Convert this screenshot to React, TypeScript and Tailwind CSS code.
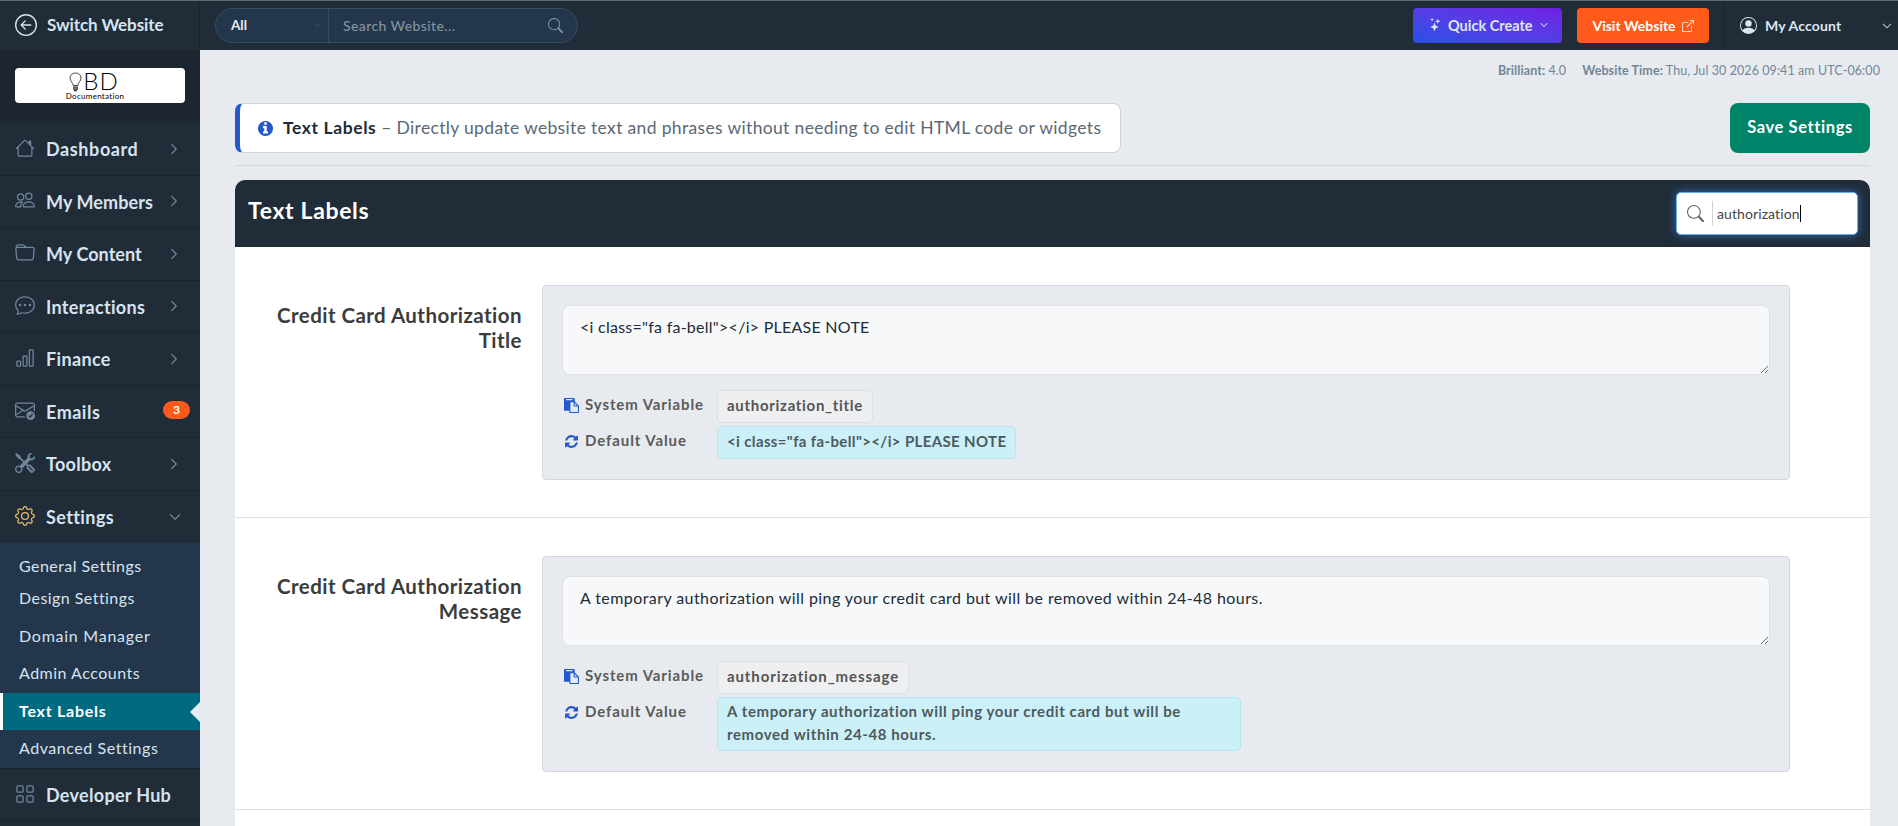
import type { ReactNode } from "react";
import type { IconType } from "react-icons";
import {
  BsArrowLeftCircle,
  BsBarChart,
  BsBoxArrowUpRight,
  BsChatDots,
  BsChevronDown,
  BsChevronRight,
  BsEnvelopeCheck,
  BsFolder,
  BsGear,
  BsGrid,
  BsHouse,
  BsPeople,
  BsPersonCircle,
  BsSearch,
  BsStars,
  BsTools,
} from "react-icons/bs";

type NavItem = { label: string; icon: IconType; tracking: string; badge?: string; open?: boolean };

const navItems: NavItem[] = [
  { label: "Dashboard", icon: BsHouse, tracking: "tracking-[0.6px]" },
  { label: "My Members", icon: BsPeople, tracking: "tracking-[0.1px]" },
  { label: "My Content", icon: BsFolder, tracking: "tracking-[0.05px]" },
  { label: "Interactions", icon: BsChatDots, tracking: "tracking-[0.3px]" },
  { label: "Finance", icon: BsBarChart, tracking: "tracking-[0.35px]" },
  { label: "Emails", icon: BsEnvelopeCheck, tracking: "tracking-[0.5px]", badge: "3" },
  { label: "Toolbox", icon: BsTools, tracking: "tracking-[0.3px]" },
  { label: "Settings", icon: BsGear, tracking: "tracking-[0.4px]", open: true },
];

const settingsLinks = [
  { label: "General Settings", size: "h-[33px]", tracking: "tracking-[0.45px]" },
  { label: "Design Settings", size: "h-[31px]", tracking: "tracking-[0.45px]" },
  { label: "Domain Manager", size: "h-[37px] mt-1", tracking: "tracking-[0.75px]" },
  { label: "Admin Accounts", size: "h-[38px]", tracking: "tracking-[0.5px]" },
  { label: "Text Labels", size: "h-[37px]", tracking: "tracking-[0.75px]", active: true },
  { label: "Advanced Settings", size: "h-[38px]", tracking: "tracking-[0.55px]" },
];

const labels = [
  {
    title: "Credit Card Authorization Title",
    text: '<i class="fa fa-bell"></i> PLEASE NOTE',
    variable: "authorization_title",
    variableClass: "tracking-[0.7px]",
    textClass: "tracking-[0.26px]",
    defaultClass: "tracking-[0.36px] pt-[3px] pb-[5px]",
  },
  {
    title: "Credit Card Authorization Message",
    text: "A temporary authorization will ping your credit card but will be removed within 24-48 hours.",
    variable: "authorization_message",
    variableClass: "tracking-[0.9px]",
    textClass: "tracking-[0.42px]",
    defaultClass: "tracking-[0.6px] pt-[2px] pb-1",
  },
];

const InfoIcon = () => (
  <svg viewBox="128 128 1536 1536" className="w-[15px] h-[15px] fill-[#2359cd] shrink-0">
    <path d="M1152 1376v-160q0-14-9-23t-23-9h-96v-512q0-14-9-23t-23-9h-320q-14 0-23 9t-9 23v160q0 14 9 23t23 9h96v320h-96q-14 0-23 9t-9 23v160q0 14 9 23t23 9h448q14 0 23-9t9-23zm-128-896v-192q0-14-9-23t-23-9h-192q-14 0-23 9t-9 23v192q0 14 9 23t23 9h192q14 0 23-9t9-23zm640 416q0 209-103 385.5t-279.5 279.5-385.5 103-385.5-103-279.5-279.5-103-385.5 103-385.5 279.5-279.5 385.5-103 385.5 103 279.5 279.5 103 385.5z" />
  </svg>
);

const PasteIcon = () => (
  <svg viewBox="0 0 1792 1792" className="w-[15px] h-[15px] fill-[#2359cd]">
    <path d="M768 1664h896v-640h-416q-40 0-68-28t-28-68v-416h-384v1152zm256-1440v-64q0-13-9.5-22.5t-22.5-9.5h-704q-13 0-22.5 9.5t-9.5 22.5v64q0 13 9.5 22.5t22.5 9.5h704q13 0 22.5-9.5t9.5-22.5zm256 672h299l-299-299v299zm512 128v672q0 40-28 68t-68 28h-960q-40 0-68-28t-28-68v-160h-544q-40 0-68-28t-28-68v-1344q0-40 28-68t68-28h1088q40 0 68 28t28 68v328q21 13 36 28l408 408q28 28 48 76t20 88z" />
  </svg>
);

const RefreshIcon = () => (
  <svg viewBox="0 0 1536 1536" className="w-[13px] h-[13px] mx-px fill-[#2359cd]">
    <path d="M1511 928q0 5-1 7-64 268-268 434.5t-478 166.5q-146 0-282.5-55t-243.5-157l-129 129q-19 19-45 19t-45-19-19-45v-448q0-26 19-45t45-19h448q26 0 45 19t19 45-19 45l-137 137q71 66 161 102t187 36q134 0 250-65t186-179q11-17 53-117 8-23 30-23h192q13 0 22.5 9.5t9.5 22.5zm25-800v448q0 26-19 45t-45 19h-448q-26 0-45-19t-19-45 19-45l138-138q-148-137-349-137-134 0-250 65t-186 179q-11 17-53 117-8 23-30 23h-199q-13 0-22.5-9.5t-9.5-22.5v-7q65-268 270-434.5t480-166.5q146 0 284 55.5t245 156.5l130-129q19-19 45-19t45 19 19 45z" />
  </svg>
);

const Logo = () => (
  <div className="h-[35px] bg-white rounded-[4px] flex flex-col items-center text-black pt-[3px] pr-3">
    <div className="flex items-start h-[21px]">
      <svg viewBox="0 0 13 20" className="w-[13px] h-[20px] fill-none stroke-[#333] mt-px" strokeWidth="0.9">
        <path d="M4.2 13.5C4.2 10.5 1 9.5 1 5.9C1 3 3.4 1 6.5 1S12 3 12 5.9c0 3.6-3.2 4.6-3.2 7.6z" />
        <path d="M4 15.2h5M4 17h5M5 18.7h3" strokeWidth="1.3" />
      </svg>
      <span className="text-[24px] leading-[20px] font-light tracking-[1px] ml-px">BD</span>
    </div>
    <span className="text-[8px] leading-[9px] tracking-[0.3px] ml-0.5">Documentation</span>
  </div>
);

const Sidebar = () => (
  <aside className="w-[200px] shrink-0 bg-[#202c38] text-[#d7e3f0]">
    <div className="h-[50px] flex items-center gap-[10px] pl-[15px] border-r border-[#1a242e]">
      <BsArrowLeftCircle className="w-[22px] h-[22px]" />
      <span className="text-[17px] font-bold tracking-[-0.1px]">Switch Website</span>
    </div>
    <div className="h-[73px] bg-[#1d252f] px-[15px] pt-[18px]">
      <Logo />
    </div>
    <nav>
      {navItems.map(({ label, icon: Icon, tracking, badge, open }) => (
        <div
          key={label}
          className={`h-[52.5px] flex items-center pl-[15px] ${open ? "" : "border-b border-[#1a242e]"}`}
        >
          <Icon className={`w-5 h-5 -mt-0.5 ${open ? "text-[#e3bd70]" : "text-[#71869a]"}`} />
          <span className={`ml-[11px] pt-0.5 text-[18px] font-bold flex-1 ${tracking}`}>{label}</span>
          {badge && (
            <span className="w-[27px] h-[18px] mr-[10px] -mt-0.5 rounded-full bg-[#ff5a1a] text-white text-xs font-bold flex items-center justify-center">
              {badge}
            </span>
          )}
          {!badge && !open && (
            <BsChevronRight className="w-3 h-3 mr-5 text-[#8296a8]" stroke="currentColor" strokeWidth="0.6" />
          )}
          {open && <BsChevronDown className="w-3 h-3 mr-[19px] text-[#8296a8]" stroke="currentColor" strokeWidth="0.6" />}
        </div>
      ))}
    </nav>
    <ul className="pt-[7px] h-[225px] bg-[#24364b]">
      {settingsLinks.map(({ label, size, tracking, active }) => (
        <li
          key={label}
          className={`${size} ${tracking} flex items-center text-[16px] ${
            active
              ? "bg-[#006b80] text-white font-bold border-l-[3px] border-white pl-4 justify-between"
              : "pl-[19px]"
          }`}
        >
          <span className="pb-0.5">{label}</span>
          {active && (
            <span className="border-y-[10px] border-y-transparent border-r-[10px] border-r-[#e7ebf0]"></span>
          )}
        </li>
      ))}
    </ul>
    <div className="h-[53px] flex items-center pl-[15px] border-y border-[#1a242e]">
      <BsGrid className="w-5 h-5 -mt-0.5 text-[#71869a]" />
      <span className="ml-[11px] pt-0.5 text-[18px] font-bold tracking-[0.3px]">Developer Hub</span>
    </div>
  </aside>
);

const TopBar = () => (
  <header className="h-[50px] shrink-0 bg-[#202c38] flex items-center pt-px pl-[15px]">
    <div className="w-[363px] h-[35px] rounded-full bg-[#24364b] border border-[#374c5e] flex items-center overflow-hidden">
      <div className="w-[113px] h-full border-r border-[#374c5e] flex items-center justify-between pl-[15px] pr-[6px]">
        <span className="text-[13.5px] font-bold text-[#e7eef5]">All</span>
        <BsChevronDown className="w-[10px] h-[10px] text-[#4a5a69] -mt-0.5" />
      </div>
      <span className="pl-[14px] flex-1 text-[14px] text-[#8293a2] font-medium tracking-[0.4px]">Search Website...</span>
      <BsSearch className="w-[15px] h-[15px] mr-[14px] text-[#8293a2]" />
    </div>
    <button className="ml-auto w-[149px] h-[35px] rounded-[4px] bg-gradient-to-tr from-[#2450e6] to-[#701ee4] text-[#dfe6fa] text-[14.5px] font-bold flex items-center pl-[15px]">
      <BsStars className="w-[13px] h-[13px] -scale-x-100 -mt-0.5" />
      <span className="ml-[7px]">Quick Create</span>
      <BsChevronDown className="w-2 h-2 ml-[7px] -mt-0.5" stroke="currentColor" strokeWidth="0.8" />
    </button>
    <button className="ml-[15px] w-[132px] h-[35px] rounded-[4px] bg-[#ff5a1a] text-white text-[14px] font-bold flex items-center justify-center">
      Visit Website
      <BsBoxArrowUpRight className="w-3 h-3 ml-[6px]" />
    </button>
    <div className="ml-[15px] w-[174px] h-[49px] border-l border-[#17212b] flex items-center pl-[15px] pr-[6px] text-[#dce6f0]">
      <BsPersonCircle className="w-[17px] h-[17px]" />
      <span className="ml-[8px] text-[14px] font-bold flex-1 tracking-[0.15px]">My Account</span>
      <BsChevronDown className="w-[10px] h-[10px]" stroke="currentColor" strokeWidth="0.6" />
    </div>
  </header>
);

const MetaRow = ({ icon, name, children }: { icon: ReactNode; name: string; children: ReactNode }) => (
  <div className="flex items-start">
    <div className="w-[155px] h-[30px] flex items-center gap-[6px] pl-[2px] text-[15px] font-bold text-[#5a5a5a]">
      {icon}
      <span className="tracking-[0.9px] whitespace-nowrap -mt-0.5">{name}</span>
    </div>
    {children}
  </div>
);

const LabelRow = ({ title, text, variable, variableClass, textClass, defaultClass }: (typeof labels)[number]) => (
  <section className="flex items-start pt-[38px] pb-[37px] border-b border-[#dfe1e4]">
    <h3 className="w-[287px] pl-8 mr-5 pt-[18px] text-right text-[20.5px] leading-[24.5px] tracking-[0.45px] font-bold text-[#3c3c3c]">
      {title}
    </h3>
    <div className="w-[1248px] rounded-[4px] border border-[#d2d8de] bg-[#e7ebf0] px-[19px] pt-[19px] pb-5">
      <textarea
        readOnly
        value={text}
        className={`block w-full h-[70px] rounded-lg border border-[#dfe1e4] bg-[#f7f8fa] px-[17px] py-[9px] text-[16px] leading-6 text-[#202c38] outline-none ${textClass}`}
      />
      <div className="pt-[15px]">
        <MetaRow icon={<PasteIcon />} name="System Variable">
          <code className={`h-[33px] rounded-[5px] border border-[#dcdee1] bg-[#eeeff1] px-[9px] pt-[2px] font-['Lato',sans-serif] font-bold text-[15px] leading-6 text-[#555] ${variableClass}`}>
            {variable}
          </code>
        </MetaRow>
        <div className="pt-[3px]">
          <MetaRow icon={<RefreshIcon />} name="Default Value">
            <div className={`max-w-[524px] rounded-[5px] border border-[#b9e6ee] bg-[#ccf0f8] px-[9px] font-bold text-[15px] leading-[23px] text-[#4d5a5d] ${defaultClass}`}>
              {text}
            </div>
          </MetaRow>
        </div>
      </div>
    </div>
  </section>
);

const App = () => {
  return (
    <div className="h-[826px] overflow-hidden flex bg-[#e7ebf0] font-['Lato',sans-serif] relative">
      {/* Thin light edge along the top of the window */}
      <div className="absolute top-0 inset-x-0 h-px bg-[#5f6d76]"></div>
      <Sidebar />
      <div className="flex-1 flex flex-col min-w-0">
        <TopBar />
        <div className="h-[53px] shrink-0 pt-[11px] pr-[18px] flex justify-end gap-4 text-[12.5px] leading-5 tracking-[0.08px] text-[#728697]">
          <span><b>Brilliant:</b> 4.0</span>
          <span><b>Website Time:</b> Thu, Jul 30 2026 09:41 am UTC-06:00</span>
        </div>

        <main className="pl-[35px] pr-7">
          <div className="flex justify-between pb-3 border-b border-[#d2d8de]">
            <div className="w-[886px] h-[50px] bg-white rounded-lg border border-[#cfd2d6] border-l-[5px] border-l-[#2359cd] flex items-center pl-[18px] text-[17.5px] text-[#5b6875]">
              <InfoIcon />
              <p className="ml-[10px] tracking-[0.34px] whitespace-nowrap">
                <b className="text-[#202c38] tracking-[0.6px]">Text Labels</b> – Directly update website text and phrases without needing to edit HTML code or widgets
              </p>
            </div>
            <button className="w-[140px] h-[50px] rounded-lg bg-[#008469] text-white text-[16.5px] tracking-[0.6px] font-bold pb-0.5">
              Save Settings
            </button>
          </div>

          <div className="mt-[14px] bg-white rounded-t-[10px]">
            <div className="h-[67px] rounded-t-[10px] bg-[#202c38] flex items-center justify-between pl-[13px] pr-3">
              <h2 className="text-[23px] font-bold text-white tracking-[0.65px] -mt-[6px]">Text Labels</h2>
              <div className="w-[182px] h-[43px] -mt-px rounded-[5px] bg-white border border-[#66afe9] shadow-[0_0_10px_rgba(60,140,230,0.7)] flex items-center pl-[10px]">
                <BsSearch className="w-[17px] h-[17px] text-[#666]" />
                <span className="ml-2 h-[25px] border-l border-[#d0d3d6]"></span>
                <span className="ml-1 text-[14px] text-[#444] tracking-[0.1px]">authorization</span>
                <span className="h-[17px] border-l border-black"></span>
              </div>
            </div>
            {labels.map((label) => (
              <LabelRow key={label.variable} {...label} />
            ))}
            <div className="h-10"></div>
          </div>
        </main>
      </div>
    </div>
  );
};

export default App;
